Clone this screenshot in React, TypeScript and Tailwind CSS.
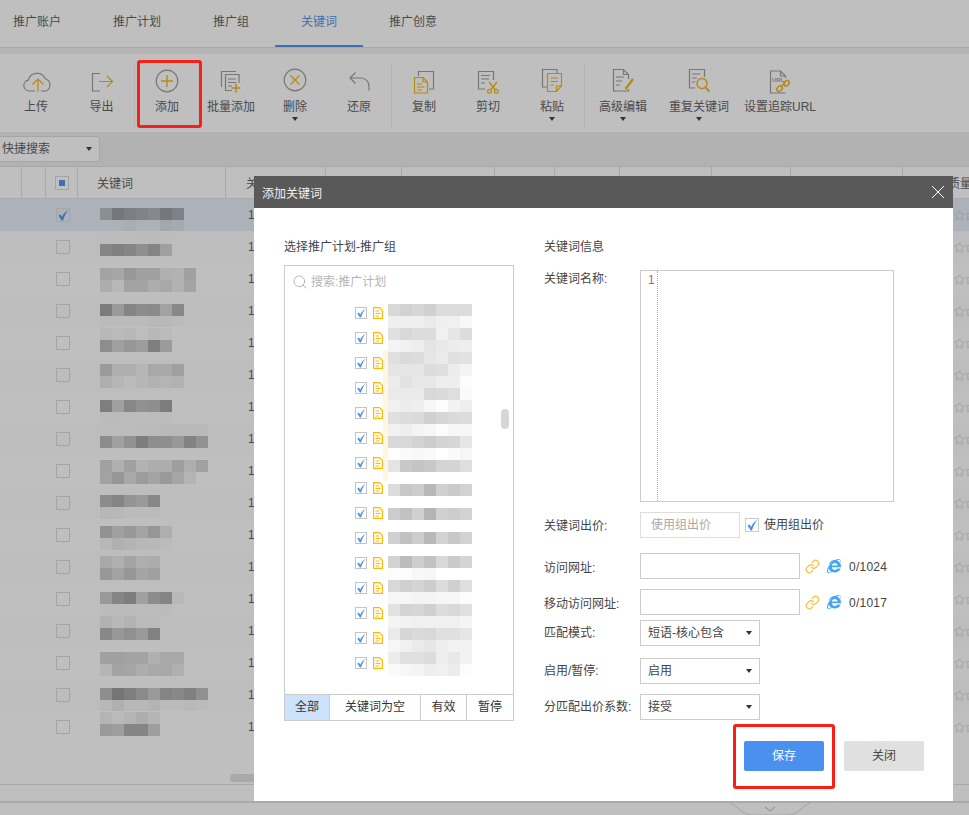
import React from "react";
import { Link as LinkIcon, Search, Star } from "lucide-react";
import { FaInternetExplorer } from "react-icons/fa";

const G = "#777777";
const Y = "#b98a10";

// grey mosaics: two digit value = grey level, six digits = full colour
const shade = (v: string) => (v.length === 2 ? `#${v}${v}${v}` : `#${v}`);

function Mosaic({ lines }: { lines: string[] }) {
  return (
    <div className="flex flex-col">
      {lines.map((line, i) => (
        <div key={i} className="flex h-3">
          {line.split(" ").map((v, j) => (
            <div key={j} className="w-3 h-3" style={{ backgroundColor: v === "--" ? "transparent" : shade(v) }} />
          ))}
        </div>
      ))}
    </div>
  );
}

const rows: { top: number; lines: string[] }[] = [
  { top: 9, lines: ["8a8d92 74777c 7b7e83 808388 85888d 74777c 7e8186", "adb1b8 adb1b8 a9adb4 adb1b8 adb1b8 a4a7ae a6aab1"] },
  { top: 1, lines: ["bc bc bc bb bb bc", "86 80 85 8f 84 9f"] },
  { top: 5, lines: ["a3 a6 98 a0 a0 b0 b2 a0", "ad b8 a3 a3 ad a8 b2 a4"] },
  { top: 9, lines: ["7c 9a 85 8c 8a a2 88", "bb bb bb bb b8 b8 bb"] },
  { top: 1, lines: ["b8 bb b8 bd b8 bb", "8d a0 97 9d 7e 9b"] },
  { top: 5, lines: ["9b ae ae b6 a8 a9 a0", "ae b6 bb b6 b2 b4 b2"] },
  { top: 9, lines: ["7e a0 87 91 8e 7d", "bb bb bc bc bc bc"] },
  { top: 1, lines: ["bc bc bc bb bb b9 b9 b9 b9", "8c a0 92 7d 8e 8e 98 82 92"] },
  { top: 5, lines: ["a1 b0 a0 b2 ad ad 9e ae a1", "a2 96 a8 9c a4 9a a6 b4 --"] },
  { top: 8, lines: ["8c 84 94 9a 88", "b6 b8 bb bb bb"] },
  { top: 7, lines: ["92 a0 98 a4 96 ae", "b8 b0 b4 b8 b8 bb"] },
  { top: 5, lines: ["a8 b0 a4 ae ac", "98 a2 96 a4 a0"] },
  { top: 9, lines: ["99 85 7d a0 8c 84 b8", "bb bb bb bc bc bb"] },
  { top: 1, lines: ["b2 b8 b3 bb ba", "88 98 90 9a 82"] },
  { top: 5, lines: ["a0 a0 a3 a3 b0 a8 a8", "b5 a3 a5 ad a9 a8 b0"] },
  { top: 9, lines: ["8e 75 7e 8a 99 84 88 80 90", "b8 b0 b8 b8 b4 bb bb b9 bb"] },
  { top: 1, lines: ["b4 ba b5 ad b5", "99 9e 85 85 9e"] },
];

const treeMosaic = [
  "d8 d2 d6 d0 dc dc dc",
  "ef ef ef ea ef f0 f8",
  "e0 d8 dc dc f0 e6 dc",
  "f4 f0 ee e4 e9 ec ee",
  "e0 da dc e6 ea e0 e2",
  "e4 e6 e6 dc de ec f4",
  "ec e2 e8 e8 ee ee fc",
  "ea ea ea d8 da de fa",
  "f0 ec ee f6 fc f2 ee",
  "e0 dc da d0 d6 da dc",
  "f2 ee f4 f6 fc f6 f6",
  "d8 d8 d2 cc d4 d6 e6",
  "ff fa f8 fa ff fa f6",
  "e4 c8 c4 c8 d4 d4 de",
  "ff ff ff ff ff ff ff",
  "dc c8 cc b8 d0 ca d2",
  "ff ff ff ff ff ff ff",
  "cc c2 d0 b4 d0 cc d2",
  "ff ff ff ff ff ff ff",
  "d0 c0 cc b8 d2 c8 d2",
  "ff ff ff ff ff ff ff",
  "d2 bc ce c2 d8 ca d4",
  "fc fc f8 f6 ff ff ff",
  "d8 d0 d4 cc dc d0 de",
  "f6 f6 f4 f4 f6 f6 fc",
  "e2 d4 d6 d0 dc d8 e0",
  "f4 f2 f0 f0 f0 f0 f4",
  "ea d6 da d8 e0 e0 e6",
  "f6 f0 ea e6 ee f2 f2",
  "ec e0 e0 dc ee e8 f2",
  "fa f6 f4 ee f0 ec fc",
];

function Ico({ children }: { children: React.ReactNode }) {
  return (
    <svg width="32" height="32" viewBox="0 0 32 32" fill="none" strokeWidth="1.2" stroke={G}>
      {children}
    </svg>
  );
}

// the thick-thin tick of the page's checkboxes
function Tick({ size, color }: { size: number; color: string }) {
  return (
    <svg width={size} height={size} viewBox="0 0 12 12" fill={color}>
      <path d="M1.500 6.500L3.500 5.500L5 8C6.300 5 8.300 2.800 11.500 .8C9 3.500 7.300 7 6 11.500H4.700Z" />
    </svg>
  );
}

const icons: Record<string, React.ReactNode> = {
  upload: (
    <Ico>
      <path d="M15 26H9.500a5.500 5.500 0 0 1-1.200-10.900a9 9 0 0 1 17-1.300a6.500 6.500 0 0 1 .7 12.200H21" />
      <path d="M18 27V14M12.500 19.500L18 14l5.500 5.500" stroke={Y} />
    </Ico>
  ),
  export: (
    <Ico>
      <path d="M14 8.500H6.500v17.500H14" />
      <path d="M13 16.500h13.500M21 11l5.500 5.500L21 22" stroke={Y} />
    </Ico>
  ),
  add: (
    <Ico>
      <circle cx="16" cy="16" r="10.800" />
      <path d="M16 10v12M10 16h12" stroke={Y} strokeWidth="1.400" />
    </Ico>
  ),
  batch: (
    <Ico>
      <path d="M21 6.500H6.500V22" />
      <path d="M24 18V9.500H10.500V25.500H17" />
      <path d="M13 14h8M13 17.500h8M13 21h4" />
      <path d="M21 18.500v9M16.500 23h9" stroke={Y} strokeWidth="1.500" />
    </Ico>
  ),
  del: (
    <Ico>
      <circle cx="16" cy="15" r="10.800" />
      <path d="M11.500 10.500l9 9M20.500 10.500l-9 9" stroke={Y} strokeWidth="1.300" />
    </Ico>
  ),
  undo: (
    <Ico>
      <path d="M7 13H18a8 8 0 0 1 8 8v4.500" />
      <path d="M12.500 7.500L7 13l5.500 5.500" />
    </Ico>
  ),
  copy: (
    <Ico>
      <path d="M10.500 11V6.500h15V24H21" />
      <path d="M6.500 12.500H15l4.500 4.500V28H6.500Z" stroke={Y} />
      <path d="M15 12.500V17h4.500M9 19h5M9 22h7.500M9 25h5" stroke={Y} />
    </Ico>
  ),
  cut: (
    <Ico>
      <path d="M21.500 15V6.500h-15V24H13" />
      <path d="M9 10.500h9M9 14h8M9 18h4" />
      <path d="M17 17l6.500 8M25 17l-6.500 8" stroke={Y} strokeWidth="1.300" />
      <circle cx="17.500" cy="26.300" r="1.900" stroke={Y} />
      <circle cx="24.300" cy="26.300" r="1.900" stroke={Y} />
    </Ico>
  ),
  paste: (
    <Ico>
      <path d="M21 8V4.500H6.500V22H11" />
      <path d="M11.500 8.500h14V21l-5 5.500h-9Z" stroke={Y} />
      <path d="M20.500 26v-5h5M14.500 13h7.500M14.500 16.500h7.500M14.500 20h3" stroke={Y} />
    </Ico>
  ),
  edit: (
    <Ico>
      <path d="M21.500 14V9.500l-5-5H6.500V26h15v-2" />
      <path d="M16.500 4.500v5h5M9 12h8M9 16h6M9 20h4" />
      <path d="M18.500 24L26 14" stroke={Y} strokeWidth="2.400" />
    </Ico>
  ),
  find: (
    <Ico>
      <path d="M21.500 12V4.500h-15V23H12" />
      <path d="M9 9h8M9 13h5M9 17h3" />
      <circle cx="19" cy="18.500" r="5" stroke={Y} strokeWidth="1.400" />
      <path d="M22.500 22.500l4 4" stroke={Y} strokeWidth="2" />
    </Ico>
  ),
  url: (
    <Ico>
      <path d="M21.500 13V11l-5-5H6.500v22h15" />
      <path d="M16.500 6v5h5" />
      <text x="8" y="17" fontSize="6" fontWeight="700" fill={G} stroke="none" fontFamily="Liberation Sans">URL</text>
      <g stroke={Y} strokeWidth="1.500">
        <rect x="12.500" y="21.500" width="6" height="4.500" rx="2.200" transform="rotate(-45 15.500 23.700)" />
        <rect x="19.500" y="16" width="6" height="4.500" rx="2.200" transform="rotate(-45 22.500 18.200)" />
        <path d="M17.500 21l4-4" />
      </g>
    </Ico>
  ),
};

const tools: { label: string; icon: string; w: string; menu?: boolean; sep?: boolean }[] = [
  { label: "上传", icon: "upload", w: "w-[66px]" },
  { label: "导出", icon: "export", w: "w-[66px]", sep: true },
  { label: "添加", icon: "add", w: "w-[64px]" },
  { label: "批量添加", icon: "batch", w: "w-[64px]" },
  { label: "删除", icon: "del", w: "w-[64px]", menu: true },
  { label: "还原", icon: "undo", w: "w-[65px]", sep: true },
  { label: "复制", icon: "copy", w: "w-[64px]" },
  { label: "剪切", icon: "cut", w: "w-[64px]" },
  { label: "粘贴", icon: "paste", w: "w-[65px]", menu: true, sep: true },
  { label: "高级编辑", icon: "edit", w: "w-[76px]", menu: true },
  { label: "重复关键词", icon: "find", w: "w-[76px]", menu: true },
  { label: "设置追踪URL", icon: "url", w: "w-[86px]" },
];

const headCols = ["w-[22px]", "w-[24px]", "w-[32px]", "w-[148px]", "w-[100px]", "w-[76px]", "w-[93px]", "w-[60px]", "w-[65px]", "w-[92px]", "w-[79px]", "w-[112px]"];

function Caret({ color = "border-t-[#333333]" }: { color?: string }) {
  return <span className={`inline-block w-0 h-0 border-x-[3.5px] border-t-[4px] border-x-transparent ${color}`} />;
}

function Select({ value }: { value: string }) {
  return (
    <div className="w-[120px] h-[26px] border border-[#cccccc] flex items-center justify-between pl-[7px] pr-[7px] text-[#444444]">
      <span>{value}</span>
      <Caret />
    </div>
  );
}

function FileIcon() {
  return (
    <svg width="10" height="12" viewBox="0 0 10 12" fill="none" stroke="#ffb900" strokeWidth="1.200">
      <path d="M.6.600H6.500L9.400 3.500V11.400H.6Z" />
      <path d="M2.500 4H6M2.500 6.500H7.500M2.500 9H6" strokeWidth="1" />
    </svg>
  );
}

function UrlRow({ label, count, cls }: { label: string; count: string; cls: string }) {
  return (
    <div className={`flex items-center h-[26px] ${cls}`}>
      <span className="w-[96px] pt-[3px] text-[#444444]">{label}</span>
      <div className="w-[160px] h-[26px] border border-[#cccccc]" />
      <LinkIcon size={15} strokeWidth={2} className="ml-[5px] text-[#f6c244]" />
      <FaInternetExplorer size={14} className="ml-[7px] text-[#46a5f2]" />
      <span className="ml-[8px] pt-[2px] text-[#444444] tracking-[0.25px]">{count}</span>
    </div>
  );
}

export default function App() {
  return (
    <div className="relative w-[969px] h-[815px] overflow-hidden bg-[#bfbfbf] text-[12px] leading-[18px] text-[#4a4a4a] font-['Liberation_Sans','Noto_Sans_CJK_SC',sans-serif]">
      {/* tabs */}
      <div className="flex h-[48px] border-b border-[#a9a9a9] -ml-[13px]">
        {["推广账户", "推广计划", "推广组", "关键词", "推广创意"].map((t) => (
          <div
            key={t}
            className={`px-[26px] h-[47px] pt-[13px] ${t === "关键词" ? "border-b-2 border-[#3c6fb3] text-[#3d6fb0]" : ""}`}
          >
            {t}
          </div>
        ))}
      </div>
      <div className="h-[6px] bg-[#b5b5b5]" />

      {/* toolbar */}
      <div className="flex h-[78px] pl-[3px] pt-[11px]">
        {tools.map((t) => (
          <div key={t.label} className={`${t.w} h-[62px] flex flex-col items-center relative ${t.sep ? "border-r border-[#b3b3b3]" : ""}`}>
            <div className="h-[32px]">{icons[t.icon]}</div>
            <div className="whitespace-nowrap mt-[1px]">{t.label}</div>
            {t.menu && <div className="leading-[0] mt-[1px]"><Caret /></div>}
          </div>
        ))}
      </div>

      {/* quick search */}
      <div className="h-[34px] bg-[#b2b2b2] pt-[4px]">
        <div className="-ml-[2px] w-[102px] h-[26px] bg-[#bfbfbf] border border-[#a5a5a5] rounded-[2px] flex items-center justify-between pl-[3px] pr-[7px]">
          <span>快捷搜索</span>
          <Caret />
        </div>
      </div>

      {/* table */}
      <div className="flex h-[33px] border-y border-[#a9a9a9]">
        {headCols.map((w, i) => (
          <div key={i} className={`${w} h-full border-r border-[#a9a9a9] flex items-center shrink-0`}>
            {i === 2 && (
              <span className="ml-[9px] w-[14px] h-[14px] border border-[#a5a5a5] flex items-center justify-center">
                <span className="w-[6px] h-[6px] bg-[#3c6fb3]" />
              </span>
            )}
            {i === 3 && <span className="pl-[19px] pt-[3px]">关键词</span>}
            {i === 4 && <span className="pl-[20px] pt-[3px]">关键词</span>}
          </div>
        ))}
        <div className="pl-[45px] pt-[3px] flex items-center whitespace-nowrap">质量度</div>
      </div>
      {rows.map((r, i) => (
        <div
          key={i}
          className={`flex h-[32px] overflow-hidden ${i === 0 ? "bg-[#adb1b9]" : i % 2 ? "bg-[#bdbdbd]" : "bg-[#bfbfbf]"}`}
        >
          <div className="w-[78px] shrink-0 pl-[56px] flex items-center">
            <span className="w-[14px] h-[14px] border border-[#a5a5a5] flex items-center justify-center">
              {i === 0 && <Tick size={12} color="#3c6fb3" />}
            </span>
          </div>
          <div className="w-[148px] shrink-0 pl-[22px]" style={{ paddingTop: r.top }}>
            <Mosaic lines={r.lines} />
          </div>
          <div className="w-[100px] shrink-0 pl-[22px] flex items-center">1</div>
          <div className="pl-[628px] flex items-center text-[#8f8f8f]">
            <Star size={11} strokeWidth={1.2} className="shrink-0" />
            <Star size={11} strokeWidth={1.2} className="shrink-0" />
          </div>
        </div>
      ))}
      <div className="h-[42px] border-b border-[#a9a9a9] pt-[31px]">
        <div className="ml-[230px] w-[120px] h-[8px] rounded-full bg-[#a9a9a9]" />
      </div>
      <div className="h-[16px]" />
      <div className="border-t-2 border-[#a9a9a9] pl-[730px]">
        <svg width="80" height="13" viewBox="0 0 80 13" fill="none" stroke="#a3a3a3">
          <path d="M0 0C8 3 12 12 22 12H58C68 12 72 3 80 0" />
          <path d="M35 4l5 4 5-4" stroke="#8a8a8a" />
        </svg>
      </div>

      {/* annotation */}
      <div className="absolute left-[137px] top-[60px] w-[65px] h-[68px] border-[3px] border-[#fb1e14] rounded-[3px]" />

      {/* dialog */}
      <div className="absolute left-[254px] top-[176px] w-[699px] h-[625px] bg-white flex flex-col">
        <div className="h-[32px] shrink-0 bg-[#595959] flex items-center justify-between pl-[8px] pr-[9px] text-[#f2f2f2]">
          <span className="pt-[3px]">添加关键词</span>
          <svg width="12" height="12" viewBox="0 0 12 12" stroke="#ffffff" strokeWidth="1">
            <path d="M0 0L12 12M12 0L0 12" />
          </svg>
        </div>
        <div className="flex pl-[30px] pt-[30px] text-[#444444]">
          {/* tree */}
          <div className="w-[230px]">
            <div className="h-[18px]">选择推广计划-推广组</div>
            <div className="relative mt-[9px] w-[230px] h-[456px] border border-[#cccccc] flex flex-col">
              <div className="h-[34px] flex items-center pl-[7px] pb-[3px] text-[#b5b5b5]">
                <Search size={16} strokeWidth={1.5} />
                <span className="ml-[3px]">搜索:推广计划</span>
              </div>
              <div className="flex flex-col pl-[70px]">
                {treeMosaic.slice(0, 15).map((_, i) => (
                  <div key={i} className="h-[25px] flex items-center">
                    <span className="w-[12px] h-[12px] border border-[#c4c4c4] flex items-center justify-center">
                      <Tick size={10} color="#4a90ee" />
                    </span>
                    <span className="ml-[6px] flex"><FileIcon /></span>
                  </div>
                ))}
              </div>
              <div className="absolute left-[98px] top-[85px] w-[5px] h-[130px] bg-[#fdf6e2]" />
              <div className="absolute left-[103px] top-[38px]">
                <Mosaic lines={treeMosaic} />
              </div>
              <div className="absolute left-[216px] top-[143px] w-[8px] h-[20px] rounded-full bg-[#d6d6d6]" />
              <div className="mt-auto h-[26px] border-t border-[#cccccc] flex items-center text-center text-[#333333]">
                <div className="w-[45px] h-full leading-[25px] bg-[#cce1fa] border-r border-[#cccccc]">全部</div>
                <div className="w-[91px] h-full leading-[25px] border-r border-[#cccccc]">关键词为空</div>
                <div className="w-[46px] h-full leading-[25px] border-r border-[#cccccc]">有效</div>
                <div className="flex-1 h-full leading-[25px]">暂停</div>
              </div>
            </div>
          </div>

          {/* form */}
          <div className="ml-[30px] w-[380px]">
            <div className="h-[18px]">关键词信息</div>
            <div className="flex mt-[14px]">
              <span className="w-[96px]">关键词名称:</span>
              <div className="w-[254px] h-[232px] border border-[#cccccc] flex">
                <div className="w-[17px] h-full border-r border-dotted border-[#c9a898] pl-[7px] text-[#c0683a]">1</div>
              </div>
            </div>
            <div className="flex items-center h-[26px] mt-[10px]">
              <span className="w-[96px] pt-[2px]">关键词出价:</span>
              <div className="w-[100px] h-[26px] border border-[#dddddd] pl-[10px] leading-[24px] text-[#a8a8a8]">使用组出价</div>
              <span className="ml-[5px] w-[14px] h-[14px] border border-[#cccccc] flex items-center justify-center">
                <Tick size={12} color="#4a90ee" />
              </span>
              <span className="ml-[5px]">使用组出价</span>
            </div>
            <UrlRow label="访问网址:" count="0/1024" cls="mt-[15px]" />
            <UrlRow label="移动访问网址:" count="0/1017" cls="mt-[10px]" />
            <div className="flex items-center mt-[5px]">
              <span className="w-[96px]">匹配模式:</span>
              <Select value="短语-核心包含" />
            </div>
            <div className="flex items-center mt-[12px]">
              <span className="w-[96px]">启用/暂停:</span>
              <Select value="启用" />
            </div>
            <div className="flex items-center mt-[10px]">
              <span className="w-[96px] whitespace-nowrap">分匹配出价系数:</span>
              <Select value="接受" />
            </div>
            <div className="flex mt-[21px] ml-[200px] gap-[20px]">
              <div className="relative w-[80px] h-[30px] rounded-[2px] bg-[#4a90ee] text-white text-center leading-[30px]">
                保存
                <div className="absolute -left-[11px] -top-[17px] w-[102px] h-[65px] border-[3px] border-[#fb1e14] rounded-[3px]" />
              </div>
              <div className="w-[80px] h-[30px] rounded-[2px] bg-[#e0e0e0] text-center leading-[30px]">关闭</div>
            </div>
          </div>
        </div>
      </div>
    </div>
  );
}
